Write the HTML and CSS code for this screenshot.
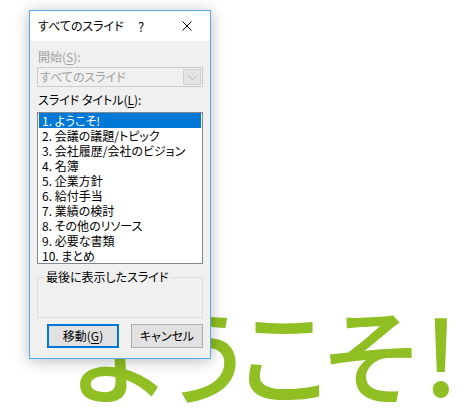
FILE: index.html
```html
<!DOCTYPE html>
<html lang="ja">
<head>
<meta charset="utf-8">
<title>すべてのスライド</title>
<link rel="stylesheet" href="styles.css">
</head>
<body>
<div class="stage">
  <p class="slide-title">ようこそ<span class="bang">!</span></p>
  <div class="dialog">
    <div class="titlebar">
      <span class="title">すべてのスライド</span>
      <span class="tb-btn help">?</span>
      <span class="tb-btn close">
        <svg width="10" height="10" viewBox="0 0 10 10"><path d="M0.5 0.5 L9.5 9.5 M9.5 0.5 L0.5 9.5" stroke="#000" stroke-width="1" fill="none"/></svg>
      </span>
    </div>
    <div class="dlg-body">
      <div class="label disabled">開始(<u>S</u>):</div>
      <div class="combo">
        <span class="combo-text">すべてのスライド</span>
        <span class="combo-btn"><svg width="9" height="5" viewBox="0 0 9 5"><path d="M0.5 0.5 L4.5 4.5 L8.5 0.5" stroke="#b4b4b4" stroke-width="1" fill="none"/></svg></span>
      </div>
      <div class="label">スライド タイトル(<u>L</u>):</div>
      <ul class="list">
        <li class="selected">1. ようこそ!</li>
        <li>2. 会議の議題/トピック</li>
        <li>3. 会社履歴/会社のビジョン</li>
        <li>4. 名簿</li>
        <li>5. 企業方針</li>
        <li>6. 給付手当</li>
        <li>7. 業績の検討</li>
        <li>8. その他のリソース</li>
        <li>9. 必要な書類</li>
        <li>10. まとめ</li>
      </ul>
      <fieldset class="group">
        <legend>最後に表示したスライド</legend>
        <div class="group-inner"></div>
      </fieldset>
      <div class="buttons">
        <button class="btn default">移動(<u>G</u>)</button>
        <button class="btn">キャンセル</button>
      </div>
    </div>
  </div>
</div>
</body>
</html>
```
FILE: styles.css
```css
* { box-sizing: border-box; }
html, body { margin: 0; padding: 0; background: #fff; }
body {
  font-family: "Noto Sans CJK JP", "Noto Sans", sans-serif;
  font-feature-settings: "palt";
  font-size: 12px;
  color: #000;
}
.stage {
  position: relative;
  width: 467px;
  height: 412px;
  overflow: hidden;
}
.slide-title {
  margin: 0;
  padding: 300px 0 0 74px;
  font-size: 104px;
  font-weight: 500;
  line-height: 1;
  letter-spacing: -6px;
  color: #8fbf22;
  white-space: nowrap;
}
.bang { margin-left: 12px; }
.dialog {
  position: absolute;
  left: 29px;
  top: 10px;
  width: 182px;
  border: 1px solid #56a9ec;
  background: #f0f0f0;
  box-shadow: 0 2px 14px rgba(0, 0, 0, 0.28);
}
.titlebar {
  display: flex;
  align-items: center;
  height: 30px;
  background: #fff;
}
.title {
  flex: 1;
  min-width: 0;
  padding-left: 8px;
  line-height: 30px;
  white-space: nowrap;
}
.tb-btn {
  flex: none;
  width: 46px;
  height: 30px;
  display: flex;
  align-items: center;
  justify-content: center;
}
.help { font-size: 13px; padding-top: 1px; }
.dlg-body {
  padding: 8px 7px 10px 7px;
}
.label {
  height: 15px;
  line-height: 15px;
  padding-left: 1px;
}
.label.disabled { color: #a0a0a0; }
.combo {
  margin-top: 3px;
  height: 20px;
  display: flex;
  align-items: stretch;
  border: 1px solid #cccccc;
  background: #f0f0f0;
  color: #a0a0a0;
}
.combo-text {
  flex: 1;
  line-height: 18px;
  padding-left: 2px;
}
.combo-btn {
  width: 18px;
  margin: 1px;
  border: 1px solid #d0d0d0;
  background: #e4e4e4;
  display: flex;
  align-items: center;
  justify-content: center;
}
.label + .list { margin-top: 5px; }
.combo + .label { margin-top: 5px; }
.list {
  list-style: none;
  margin: 0;
  padding: 0;
  height: 152px;
  border: 1px solid #828790;
  background: #fff;
}
.list li {
  height: 15px;
  line-height: 15px;
  padding-left: 3px;
  margin: 0 1px;
  white-space: nowrap;
}
.list li.selected {
  background: #0078d7;
  color: #fff;
}
.group {
  margin: 6px 0 0 0;
  padding: 0;
  border: 1px solid #dcdcdc;
  min-width: 0;
}
.group legend {
  margin-left: 6px;
  padding: 0 2px;
  line-height: 14px;
  color: #000;
}
.group-inner { height: 33px; }
.buttons {
  margin-top: 6px;
  display: flex;
  gap: 12px;
  padding-left: 10px;
}
.btn {
  width: 72px;
  height: 24px;
  padding: 0;
  font: inherit;
  color: #000;
  background: #e1e1e1;
  border: 1px solid #adadad;
  line-height: 20px;
}
.btn.default { border: 2px solid #0078d7; }
u { text-decoration: underline; text-underline-offset: 2px; }
```
